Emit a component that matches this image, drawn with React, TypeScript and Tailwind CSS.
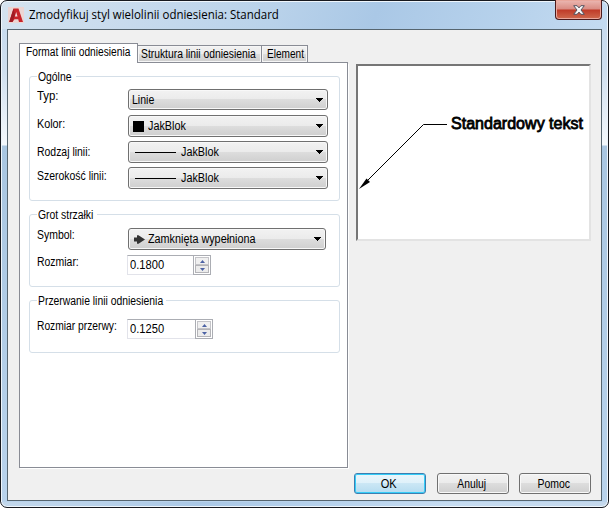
import type { ReactNode } from "react";
import clsx from "clsx";

function Txt({ children, className }: { children: ReactNode; className?: string }) {
  return (
    <span
      className={clsx(
        "block h-4 text-[12px] leading-4 whitespace-nowrap",
        className ?? "origin-left scale-x-[0.87]"
      )}
    >
      {children}
    </span>
  );
}

function Group({
  title,
  titleClass,
  className,
  children,
}: {
  title: string;
  titleClass: string;
  className: string;
  children: ReactNode;
}) {
  return (
    <section className={clsx("rounded-[3px] border border-[#d5dfe8] pl-[7px]", className)}>
      <div className="-mt-[8px] flex h-4">
        <h2 className={clsx("bg-white pl-px", titleClass)}>
          <Txt className="origin-left scale-x-[0.865]">{title}</Txt>
        </h2>
      </div>
      {children}
    </section>
  );
}

function Row({
  label,
  className,
  labelClass,
  textClass,
  children,
}: {
  label: string;
  className: string;
  labelClass: string;
  textClass?: string;
  children: ReactNode;
}) {
  return (
    <div className={clsx("flex items-start", className)}>
      <div className={clsx("-mt-px shrink-0", labelClass)}>
        <Txt className={textClass}>{label}</Txt>
      </div>
      {children}
    </div>
  );
}

function Select({ className, children }: { className: string; children: ReactNode }) {
  return (
    <button
      className={clsx(
        "flex items-center rounded-[3px] border border-[#707070] bg-[linear-gradient(#f2f2f2,#ebebeb_49%,#dddddd_50%,#cfcfcf)] pr-[4px] pl-[3px] shadow-[inset_0_0_0_1px_#f8f8f8]",
        className
      )}
    >
      {children}
      <svg className="ml-auto" width="7" height="4" viewBox="0 0 7 4" shapeRendering="crispEdges">
        <path d="M0 0h7v1H6v1H5v1H4v1H3V3H2V2H1V1H0z" />
      </svg>
    </button>
  );
}

function LineSelect() {
  return (
    <Select className="h-[22px] w-[200px]">
      <span className="ml-[3px] h-px w-[41px] bg-black" />
      <Txt className="ml-[5px] origin-left scale-x-[0.9]">JakBlok</Txt>
    </Select>
  );
}

function Spinner({ value, className }: { value: string; className: string }) {
  return (
    <div
      className={clsx(
        "flex h-5 justify-between border border-[#e2e3ea] border-t-[#abadb3] pl-[2px]",
        className
      )}
    >
      <Txt className="mt-[1px] origin-left scale-x-[0.93]">{value}</Txt>
      <div className="-my-px -mr-px flex w-[18px] flex-col border border-[#abadb3] bg-white p-px">
        <span className="flex flex-1 items-center justify-center border border-[#c4c4c8] bg-[#f0f0f0]">
          <svg width="5" height="3" viewBox="0 0 5 3">
            <path d="M2.5 0L5 3H0z" fill="#4c62a4" />
          </svg>
        </span>
        <span className="flex flex-1 items-center justify-center border border-[#b4b4b8] bg-[#ececec]">
          <svg width="5" height="3" viewBox="0 0 5 3">
            <path d="M0 0h5L2.5 3z" fill="#4c62a4" />
          </svg>
        </span>
      </div>
    </div>
  );
}

function TitleBar() {
  return (
    <header className="flex h-[28px] shrink-0">
      <svg className="mt-[6px] ml-[7px]" width="16" height="16" viewBox="0 0 16 16">
        <rect width="16" height="16" fill="#ecd5d3" />
        <path d="M1.200 15L5.500 1.500h5L15 15h-4l-.8-2.800H6.500L4.500 15z" fill="#c8252b" />
        <path d="M1.200 15L5.500 1.500 7 7.500 4.500 15z" fill="#a01c24" />
        <path d="M8.200 5l1.300 4.400H6.900z" fill="#f3dede" />
      </svg>
      <h1 className="mt-[5px] ml-[5px] h-[18px] origin-left scale-x-[0.957] text-[12px] leading-[18px] whitespace-nowrap font-['Open_Sans',sans-serif]">
        Zmodyfikuj styl wielolinii odniesienia: Standard
      </h1>
      <button className="-mt-px mr-[6px] ml-auto flex h-[20px] w-[47px] items-center justify-center rounded-b-[4px] border border-t-0 border-[#4b1a1c] bg-[linear-gradient(#ecb9b3,#d98b82_48%,#bf3a28_52%,#cf6a4e)] shadow-[inset_0_0_0_1px_#e9a79c]">
        <svg width="12" height="10" viewBox="0 0 12 10">
          <path
            d="M.7.7h3.400L6 2.900 7.900.7h3.400L8 5l3.300 4.300H7.900L6 7.100 4.100 9.300H.7L4 5z"
            fill="#f7f7f7"
            stroke="#53535f"
            strokeWidth="1"
          />
        </svg>
      </button>
    </header>
  );
}

function FormatTab() {
  return (
    <div className="h-[405px] w-[329px] border border-[#898c95] border-t-0 bg-white pt-[13px] pl-[9px] shadow-[1px_1px_0_#fff]">
      <Group title="Ogólne" titleClass="w-[39px]" className="h-[125px] w-[311px]">
        <Row
          label="Typ:"
          className="mt-[4px] h-[26px]"
          labelClass="w-[91px]"
          textClass="origin-left scale-x-[0.95]"
        >
          <Select className="h-[21px] w-[200px]">
            <Txt className="origin-left scale-x-[0.88]">Linie</Txt>
          </Select>
        </Row>
        <Row
          label="Kolor:"
          className="h-[26px]"
          labelClass="w-[91px] pt-[2px]"
          textClass="origin-left scale-x-[0.9]"
        >
          <Select className="h-[22px] w-[200px]">
            <span className="ml-[1px] size-[11px] bg-black" />
            <Txt className="ml-[4px] origin-left scale-x-[0.9]">JakBlok</Txt>
          </Select>
        </Row>
        <Row label="Rodzaj linii:" className="h-[26px]" labelClass="w-[91px] pt-[4px]">
          <LineSelect />
        </Row>
        <Row label="Szerokość linii:" className="h-[26px]" labelClass="w-[91px] pt-[2px]">
          <LineSelect />
        </Row>
      </Group>
      <Group title="Grot strzałki" titleClass="w-[60px]" className="mt-[13px] h-[73px] w-[311px]">
        <Row label="Symbol:" className="mt-[5px] h-[27px]" labelClass="w-[91px]">
          <Select className="h-[22px] w-[198px]">
            <svg className="ml-[2px]" width="11" height="9" viewBox="0 0 11 9">
              <path d="M0 2.500h3V.3h1.500L11 4.500 4.500 8.700H3V6.500H0z" fill="#333" />
            </svg>
            <Txt className="ml-[3px] origin-left scale-x-[0.9]">Zamknięta wypełniona</Txt>
          </Select>
        </Row>
        <Row label="Rozmiar:" className="h-5" labelClass="w-[90px]">
          <Spinner value="0.1800" className="w-[84px]" />
        </Row>
      </Group>
      <Group
        title="Przerwanie linii odniesienia"
        titleClass="w-[129px]"
        className="mt-[13px] h-[53px] w-[311px]"
      >
        <Row
          label="Rozmiar przerwy:"
          className="mt-[10px] h-5"
          labelClass="w-[90px]"
          textClass="origin-left scale-x-[0.855]"
        >
          <Spinner value="0.1250" className="w-[86px]" />
        </Row>
      </Group>
    </div>
  );
}

function Tabs() {
  return (
    <nav className="flex h-[20px] w-[329px] items-end">
      <button className="flex h-[20px] w-[119px] items-start border border-b-0 border-[#898c95] bg-white pl-[6px]">
        <Txt className="w-[104px] origin-left scale-x-[0.85] text-left">Format linii odniesienia</Txt>
      </button>
      <div className="flex h-[18px] flex-1 border-b border-[#898c95]">
        <button className="w-[124px] border-t border-r border-[#898c95] bg-[linear-gradient(#f2f2f2,#ebebeb_49%,#dddddd_50%,#cfcfcf)] pl-[3px] text-left shadow-[inset_0_0_0_1px_#f6f6f6]">
          <Txt className="w-[115px] origin-left scale-x-[0.86]">Struktura linii odniesienia</Txt>
        </button>
        <button className="w-[46px] border-t border-r border-[#898c95] bg-[linear-gradient(#f2f2f2,#ebebeb_49%,#dddddd_50%,#cfcfcf)] pl-[5px] text-left shadow-[inset_0_0_0_1px_#f6f6f6]">
          <Txt className="w-[37px] origin-left scale-x-[0.84]">Element</Txt>
        </button>
      </div>
    </nav>
  );
}

function Preview() {
  return (
    <div className="mt-[21px] ml-[8px] h-[177px] w-[235px] border-2 border-t-[#767676] border-r-[#e3e3e3] border-b-[#e3e3e3] border-l-[#767676] bg-white">
      <svg width="231" height="173" viewBox="0 0 231 173">
        <path d="M10 114L65.500 58.500H89" fill="none" stroke="#000" />
        <path d="M1 123l7.500-10.500 3.500 3.500z" />
        <text
          x="93"
          y="62.500"
          textLength="132"
          lengthAdjust="spacingAndGlyphs"
          fontSize="16"
          stroke="#000"
          strokeWidth="0.8"
          className="font-['Liberation_Sans',sans-serif]"
        >
          Standardowy tekst
        </text>
      </svg>
    </div>
  );
}

const buttonBase = "flex h-[21px] w-[72px] items-center justify-center rounded-[3px] border";
const buttonPlain =
  "border-[#707070] bg-[linear-gradient(#f2f2f2,#ebebeb_49%,#dddddd_50%,#cfcfcf)] shadow-[inset_0_0_0_1px_#f8f8f8]";

function Actions() {
  return (
    <footer className="mt-[5px] -ml-[11px] flex pl-[346px]">
      <button
        className={clsx(
          buttonBase,
          "border-[#3c7fb1] bg-[linear-gradient(#eaf6fb,#dff1fa_49%,#cbe7f5_50%,#b5dcf0)] shadow-[inset_0_0_0_1px_#35cdf8]"
        )}
      >
        <Txt className="-translate-x-px scale-x-[0.92]">OK</Txt>
      </button>
      <button className={clsx(buttonBase, buttonPlain, "ml-[11px]")}>
        <Txt className="-translate-x-px scale-x-[0.86]">Anuluj</Txt>
      </button>
      <button className={clsx(buttonBase, buttonPlain, "ml-[10px]")}>
        <Txt className="-translate-x-px scale-x-[0.87]">Pomoc</Txt>
      </button>
    </footer>
  );
}

export default function App() {
  return (
    <div className="h-[508px] w-[609px] overflow-hidden bg-white font-['Liberation_Sans',sans-serif] text-black">
      <div className="flex h-[508px] w-[609px] flex-col rounded-[7px] border border-[#17191f] bg-[linear-gradient(110deg,#d5e3f0_0%,#b9d2ea_35%,#aac8e6_48%,#b7d2ec_65%,#c6dcf1_80%,#c4d8ec_100%)] shadow-[inset_0_0_0_1px_#eff6fc]">
        <TitleBar />
        <div className="flex h-[473px] bg-[linear-gradient(#c8dbee_0px,#cfdfef_40px,#f4f8fc_116px,#a9c6e1_117px,#b9d3ec_100%)] px-[6px] shadow-[inset_1px_0_0_#eef5fb,inset_-1px_0_0_#eef5fb]">
          <main className="h-[472px] w-[595px] border border-[#56656f] bg-[#f0f0f0] pt-[13px] pl-[11px]">
            <div className="flex">
              <div>
                <Tabs />
                <FormatTab />
              </div>
              <Preview />
            </div>
            <Actions />
          </main>
        </div>
      </div>
    </div>
  );
}
